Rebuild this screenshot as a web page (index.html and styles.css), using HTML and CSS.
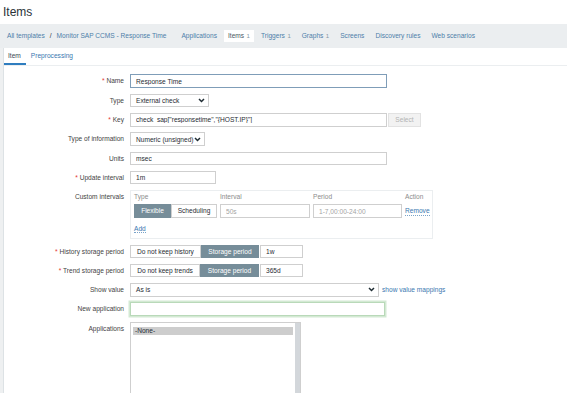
FILE: index.html
```html
<!DOCTYPE html>
<html lang="en">
<head>
    <meta charset="UTF-8">
    <meta name="viewport" content="width=device-width, initial-scale=1.0">
    <title>Items</title>
    <link rel="stylesheet" href="styles.css">
</head>
<body>
    <h1 class="page-title">Items</h1>

    <div class="nav-bar">
        <ul class="breadcrumbs">
            <li><a href="#">All templates</a></li>
            <li class="sep">/</li>
            <li><a href="#">Monitor SAP CCMS - Response Time</a></li>
        </ul>
        <ul class="host-nav">
            <li><a href="#">Applications</a></li>
            <li class="selected">Items<span class="count">1</span></li>
            <li><a href="#">Triggers<span class="count">1</span></a></li>
            <li><a href="#">Graphs<span class="count">1</span></a></li>
            <li><a href="#">Screens</a></li>
            <li><a href="#">Discovery rules</a></li>
            <li><a href="#">Web scenarios</a></li>
        </ul>
    </div>

    <div class="main">
        <div class="panel">
            <ul class="tabs">
                <li class="active">Item</li>
                <li><a href="#">Preprocessing</a></li>
            </ul>

            <form class="item-form">
                <div class="form-row">
                    <label class="form-label required">Name</label>
                    <div class="field">
                        <input class="text-input focused w-wide" type="text" value="Response Time">
                    </div>
                </div>

                <div class="form-row">
                    <label class="form-label">Type</label>
                    <div class="field">
                        <div class="select w-type">
                            <span>External check</span>
                            <svg class="chevron" width="7" height="5" viewBox="0 0 7 5"><polyline points="1,1 3.5,3.5 6,1" fill="none" stroke="#1f2c33" stroke-width="1.5"/></svg>
                        </div>
                    </div>
                </div>

                <div class="form-row">
                    <label class="form-label required">Key</label>
                    <div class="field">
                        <input class="text-input key-input w-wide" type="text" value='check_sap["responsetime","{HOST.IP}"]'>
                        <button class="btn-disabled" type="button">Select</button>
                    </div>
                </div>

                <div class="form-row">
                    <label class="form-label">Type of information</label>
                    <div class="field">
                        <div class="select w-info">
                            <span>Numeric (unsigned)</span>
                            <svg class="chevron" width="7" height="5" viewBox="0 0 7 5"><polyline points="1,1 3.5,3.5 6,1" fill="none" stroke="#1f2c33" stroke-width="1.5"/></svg>
                        </div>
                    </div>
                </div>

                <div class="form-row">
                    <label class="form-label">Units</label>
                    <div class="field">
                        <input class="text-input w-wide" type="text" value="msec">
                    </div>
                </div>

                <div class="form-row">
                    <label class="form-label required">Update interval</label>
                    <div class="field">
                        <input class="text-input w-interval" type="text" value="1m">
                    </div>
                </div>

                <div class="form-row">
                    <label class="form-label">Custom intervals</label>
                    <div class="intervals">
                        <div class="intervals-grid">
                            <div class="col-head">Type</div>
                            <div class="col-head">Interval</div>
                            <div class="col-head">Period</div>
                            <div class="col-head">Action</div>

                            <div class="seg">
                                <span class="seg-btn on w-flex">Flexible</span>
                                <span class="seg-btn w-sched">Scheduling</span>
                            </div>
                            <input class="text-input" type="text" placeholder="50s">
                            <input class="text-input" type="text" placeholder="1-7,00:00-24:00">
                            <a class="link-action" href="#">Remove</a>
                        </div>
                        <div class="add-row"><a class="link-action" href="#">Add</a></div>
                    </div>
                </div>

                <div class="form-row">
                    <label class="form-label required">History storage period</label>
                    <div class="field">
                        <div class="seg">
                            <span class="seg-btn w-nohist">Do not keep history</span>
                            <span class="seg-btn on w-store">Storage period</span>
                        </div>
                        <input class="text-input w-small" type="text" value="1w">
                    </div>
                </div>

                <div class="form-row">
                    <label class="form-label required">Trend storage period</label>
                    <div class="field">
                        <div class="seg">
                            <span class="seg-btn w-notrend">Do not keep trends</span>
                            <span class="seg-btn on w-store2">Storage period</span>
                        </div>
                        <input class="text-input w-small" type="text" value="365d">
                    </div>
                </div>

                <div class="form-row">
                    <label class="form-label">Show value</label>
                    <div class="field">
                        <div class="select w-show">
                            <span>As is</span>
                            <svg class="chevron" width="7" height="5" viewBox="0 0 7 5"><polyline points="1,1 3.5,3.5 6,1" fill="none" stroke="#1f2c33" stroke-width="1.5"/></svg>
                        </div>
                        <a class="mappings" href="#">show value mappings</a>
                    </div>
                </div>

                <div class="form-row">
                    <label class="form-label">New application</label>
                    <div class="field">
                        <input class="text-input new-app w-wide" type="text">
                    </div>
                </div>

                <div class="form-row">
                    <label class="form-label">Applications</label>
                    <div class="listbox">
                        <div class="options">
                            <div class="option selected">-None-</div>
                        </div>
                        <div class="scroll-track"></div>
                    </div>
                </div>
            </form>
        </div>
    </div>
</body>
</html>
```

FILE: styles.css
```css
body {
    margin: 0;
    font-family: "Liberation Sans", Arial, sans-serif;
    font-size: 6.6px;
    color: #1f2c33;
    background-color: #fff;
}

a {
    color: #3a78b0;
    text-decoration: none;
}

.page-title {
    margin: 0;
    padding: 5px 3px;
    font-size: 12px;
    font-weight: normal;
    line-height: 14px;
    color: #2b3338;
}

/* header navigation */
.nav-bar {
    display: flex;
    align-items: center;
    height: 24px;
    padding-left: 3px;
    gap: 7px;
    background-color: #ebeef0;
}

.nav-bar ul {
    display: flex;
    align-items: center;
    list-style: none;
    margin: 0;
    padding: 0;
}

.breadcrumbs {
    gap: 1px;
}

.host-nav {
    gap: 3px;
}

.nav-bar li {
    line-height: 12px;
}

.nav-bar a,
.nav-bar .selected {
    display: block;
    padding: 0 4px;
}

.nav-bar a {
    color: #4d7ea9;
}

.nav-bar .selected {
    background-color: #fff;
    color: #4a5a64;
}

.count {
    font-size: 6px;
    color: #8798a3;
    margin-left: 2.5px;
}

/* page body */
.main {
    padding-left: 3px;
    background-color: #eef0f1;
    min-height: 345px;
}

.panel {
    background-color: #fff;
    border-left: 1px solid #dde2e5;
    min-height: 345px;
}

.tabs {
    display: flex;
    list-style: none;
    margin: 0;
    padding: 0;
    border-bottom: 1px solid #ebeef0;
}

.tabs li {
    padding: 4px 5px 3px;
    line-height: 8px;
    border-bottom: 2px solid transparent;
}

.tabs .active {
    padding-left: 4px;
    border-bottom-color: #2f7dbf;
    color: #3b4a53;
}

/* form */
.item-form {
    display: flex;
    flex-direction: column;
    gap: 5.8px;
    padding-top: 8px;
}

.form-row {
    display: flex;
    align-items: flex-start;
}

.form-label {
    flex-shrink: 0;
    width: 120px;
    margin-right: 6px;
    text-align: right;
    line-height: 13.5px;
    color: #444;
}

.required::before {
    content: "* ";
    color: #e33734;
}

.field {
    display: flex;
    align-items: center;
}

.text-input {
    box-sizing: border-box;
    height: 13.5px;
    margin: 0;
    padding: 0 5px;
    border: 1px solid #cfcfcf;
    background-color: #fff;
    font: inherit;
    color: #1f2c33;
    outline: none;
}

.text-input::placeholder {
    color: #a4a4a4;
}

.text-input.focused {
    height: 14px;
    border-color: #7f9db8;
}

.key-input {
    padding-bottom: 1px;
}

.text-input.new-app {
    width: 255px;
    border-color: #b9d9b9;
    box-shadow: 0 0 0 1.5px #d3e9d3;
}

.w-wide { width: 257px; }
.w-interval { width: 86px; }
.w-small { width: 43px; margin-left: 1px; }

.select {
    box-sizing: border-box;
    display: flex;
    align-items: center;
    justify-content: space-between;
    height: 13.5px;
    padding: 0 3px 0 5px;
    border: 1px solid #cfcfcf;
    background-color: #fff;
}

.w-type { width: 79px; }
.w-info { width: 75px; }
.w-show { width: 249px; }

.chevron {
    display: block;
}

.btn-disabled {
    box-sizing: border-box;
    width: 33px;
    height: 13.5px;
    margin-left: 1px;
    padding: 0;
    border: 1px solid #e2e2e2;
    background-color: #f2f2f2;
    font: inherit;
    color: #b3b3b3;
}

.mappings {
    margin-left: 3px;
}

/* segmented radio buttons */
.seg {
    display: flex;
}

.seg-btn {
    box-sizing: border-box;
    height: 13.5px;
    line-height: 11.5px;
    text-align: center;
    border: 1px solid #cfcfcf;
    background-color: #fff;
    color: #1f2c33;
}

.seg-btn.on {
    background-color: #768d99;
    border-color: #768d99;
    color: #fff;
}

.w-flex { width: 37px; }
.w-sched { width: 46px; }
.w-nohist { width: 71px; }
.w-store { width: 58px; }
.w-notrend { width: 70px; }
.w-store2 { width: 59px; }

/* custom intervals table */
.intervals {
    box-sizing: border-box;
    width: 303px;
    padding: 2px 3px 5px;
    border: 1px solid #ebeef0;
}

.intervals-grid {
    display: grid;
    grid-template-columns: 83px 90px 89px auto;
    column-gap: 3px;
    row-gap: 3px;
    align-items: center;
}

.intervals-grid .text-input {
    width: 100%;
}

.col-head {
    line-height: 8px;
    color: #8c8c8c;
}

.link-action {
    justify-self: start;
    border-bottom: 1px dotted #7aa3c8;
    line-height: 8px;
}

.add-row {
    margin-top: 6px;
    line-height: 9px;
}

/* applications list */
.listbox {
    box-sizing: border-box;
    display: flex;
    width: 171px;
    height: 90px;
    border: 1px solid #cfcfcf;
    background-color: #fff;
}

.options {
    flex: 1;
    padding: 4px 2px 0;
}

.option {
    line-height: 8px;
    padding-left: 2px;
    color: #1f2c33;
}

.option.selected {
    background-color: #cdcdcd;
}

.scroll-track {
    width: 5px;
    background-color: #d3d7db;
}
```
